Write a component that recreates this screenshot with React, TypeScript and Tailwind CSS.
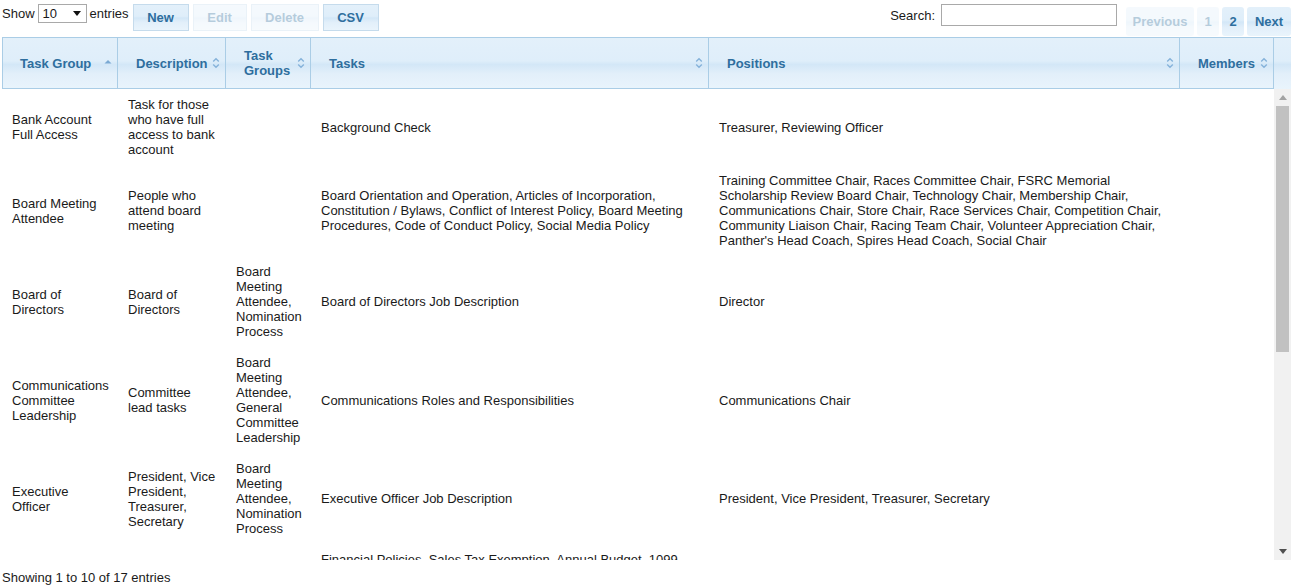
import { twJoin } from "tailwind-merge";

const headCols = "grid grid-cols-[115px_108px_85px_398px_471px_94px]";
const bodyCols = "grid grid-cols-[116px_108px_85px_398px_471px_94px]";

const glass =
	"bg-[linear-gradient(to_bottom,#e3f0fa_0%,#dfeefa_45%,#d3e7f7_52%,#e2effa_70%,#e9f4fc_100%)]";

type Row = {
	group: string;
	description: string;
	taskGroups: string;
	tasks: string;
	positions: string;
	members: string;
};

const rows: Row[] = [
	{
		group: "Bank Account Full Access",
		description: "Task for those who have full access to bank account",
		taskGroups: "",
		tasks: "Background Check",
		positions: "Treasurer, Reviewing Officer",
		members: "",
	},
	{
		group: "Board Meeting Attendee",
		description: "People who attend board meeting",
		taskGroups: "",
		tasks:
			"Board Orientation and Operation, Articles of Incorporation, Constitution / Bylaws, Conflict of Interest Policy, Board Meeting Procedures, Code of Conduct Policy, Social Media Policy",
		positions:
			"Training Committee Chair, Races Committee Chair, FSRC Memorial Scholarship Review Board Chair, Technology Chair, Membership Chair, Communications Chair, Store Chair, Race Services Chair, Competition Chair, Community Liaison Chair, Racing Team Chair, Volunteer Appreciation Chair, Panther's Head Coach, Spires Head Coach, Social Chair",
		members: "",
	},
	{
		group: "Board of Directors",
		description: "Board of Directors",
		taskGroups: "Board Meeting Attendee, Nomination Process",
		tasks: "Board of Directors Job Description",
		positions: "Director",
		members: "",
	},
	{
		group: "Communications Committee Leadership",
		description: "Committee lead tasks",
		taskGroups: "Board Meeting Attendee, General Committee Leadership",
		tasks: "Communications Roles and Responsibilities",
		positions: "Communications Chair",
		members: "",
	},
	{
		group: "Executive Officer",
		description: "President, Vice President, Treasurer, Secretary",
		taskGroups: "Board Meeting Attendee, Nomination Process",
		tasks: "Executive Officer Job Description",
		positions: "President, Vice President, Treasurer, Secretary",
		members: "",
	},
	{
		group: "",
		description: "",
		taskGroups: "",
		tasks: "Financial Policies, Sales Tax Exemption, Annual Budget, 1099 Forms",
		positions: "",
		members: "",
	},
];

export default function App() {
	return (
		<div className="w-[1298px] h-[588px] overflow-hidden bg-white pl-[2px] text-[13px] leading-[15px] text-[#1a1a1a] font-['Liberation_Sans',Arial,sans-serif]">
			<Toolbar />
			<Header />
			<div className="flex w-[1289px] h-[471px]">
				<div className="w-[1272px] overflow-hidden">
					{rows.map((r, i) => (
						<div key={i} className={twJoin(bodyCols, "items-center")}>
							<Cell>{r.group}</Cell>
							<Cell>{r.description}</Cell>
							<Cell>{r.taskGroups}</Cell>
							<Cell>{r.tasks}</Cell>
							<Cell>{r.positions}</Cell>
							<Cell>{r.members}</Cell>
						</div>
					))}
				</div>
				<Scrollbar />
			</div>
			<div className="pt-[10px]">Showing 1 to 10 of 17 entries</div>
		</div>
	);
}

function Cell({ children }: { children: string }) {
	return <div className="pl-[10px] pr-[9px] py-[8px]">{children}</div>;
}

function Toolbar() {
	return (
		<div className="flex justify-between items-start h-[37px] w-[1289px]">
			<div className="flex items-start pt-[4px]">
				<div className="flex items-center h-[19px]">
					<span>Show</span>
					<div className="flex items-center justify-between ml-[3px] mr-[3px] w-[49px] h-[19px] border border-[#a9a9a9] bg-white pl-[4px] pr-[5px]">
						<span>10</span>
						<svg width="8" height="5" viewBox="0 0 8 5">
							<path d="M0 0 H8 L4 5 Z" fill="#111" />
						</svg>
					</div>
					<span>entries</span>
				</div>
				<div className="flex gap-[4px] ml-[4px]">
					<ToolButton label="New" width="w-[56px]" />
					<ToolButton label="Edit" width="w-[54px]" disabled />
					<ToolButton label="Delete" width="w-[68px]" disabled />
					<ToolButton label="CSV" width="w-[56px]" />
				</div>
			</div>
			<div className="flex items-start">
				<div className="flex items-center pt-[4px]">
					<span className="mr-[6px]">Search:</span>
					<div className="w-[176px] h-[22px] border border-[#a9a9a9] bg-white" />
				</div>
				<div className="flex gap-[3px] ml-[9px] pt-[7px]">
					<PageButton label="Previous" width="w-[68px]" disabled />
					<PageButton label="1" width="w-[22px]" disabled />
					<PageButton label="2" width="w-[22px]" />
					<PageButton label="Next" width="w-[44px]" />
				</div>
			</div>
		</div>
	);
}

function ToolButton({ label, width, disabled }: { label: string; width: string; disabled?: boolean }) {
	return (
		<button
			className={twJoin(
				"flex items-center justify-center h-[27px] border border-[#c5dbec] font-bold text-[#2e6e9e]",
				glass,
				width,
				disabled && "opacity-35"
			)}
		>
			{label}
		</button>
	);
}

function PageButton({ label, width, disabled }: { label: string; width: string; disabled?: boolean }) {
	return (
		<button
			className={twJoin(
				"flex items-center justify-center h-[29px] rounded-[3px] font-bold text-[#2e6e9e]",
				glass,
				width,
				disabled && "opacity-35"
			)}
		>
			{label}
		</button>
	);
}

function SortIcon({ sorted }: { sorted?: boolean }) {
	if (sorted) {
		return (
			<svg width="8" height="12" viewBox="0 0 8 12" className="shrink-0">
				<path d="M0.5 6.5 L4 3 L7.5 6.5 Z" fill="#7aa9d3" />
			</svg>
		);
	}
	return (
		<svg width="8" height="12" viewBox="0 0 8 12" className="shrink-0">
			<path d="M1.2 4.6 L4 1.8 L6.8 4.6 M1.2 7.4 L4 10.2 L6.8 7.4" fill="none" stroke="#85b2da" strokeWidth="1.4" />
		</svg>
	);
}

function HeadCell({ label, sorted, first }: { label: string; sorted?: boolean; first?: boolean }) {
	return (
		<div
			className={twJoin(
				"flex items-center justify-between border-r border-[#aacde6] pr-[5px] font-bold text-[#2e6e9e]",
				first ? "pl-[17px]" : "pl-[18px]"
			)}
		>
			<span>{label}</span>
			<SortIcon sorted={sorted} />
		</div>
	);
}

function Header() {
	return (
		<div className={twJoin("flex w-[1289px] h-[52px] border-t border-l border-[#aacde6]", glass)}>
			<div className={twJoin(headCols, "w-[1271px] border-b border-[#aacde6]")}>
				<HeadCell label="Task Group" sorted first />
				<HeadCell label="Description" />
				<HeadCell label="Task Groups" />
				<HeadCell label="Tasks" />
				<HeadCell label="Positions" />
				<HeadCell label="Members" />
			</div>
			<div className="w-[17px]" />
		</div>
	);
}

function Scrollbar() {
	return (
		<div className="flex flex-col w-[17px] bg-[#f1f1f1]">
			<div className="flex items-center justify-center h-[17px]">
				<svg width="8" height="5" viewBox="0 0 8 5">
					<path d="M0 5 H8 L4 0 Z" fill="#a3a3a3" />
				</svg>
			</div>
			<div className="mx-[2px] h-[246px] bg-[#c1c1c1]" />
			<div className="flex-1" />
			<div className="flex items-center justify-center h-[17px]">
				<svg width="8" height="5" viewBox="0 0 8 5">
					<path d="M0 0 H8 L4 5 Z" fill="#505050" />
				</svg>
			</div>
		</div>
	);
}
